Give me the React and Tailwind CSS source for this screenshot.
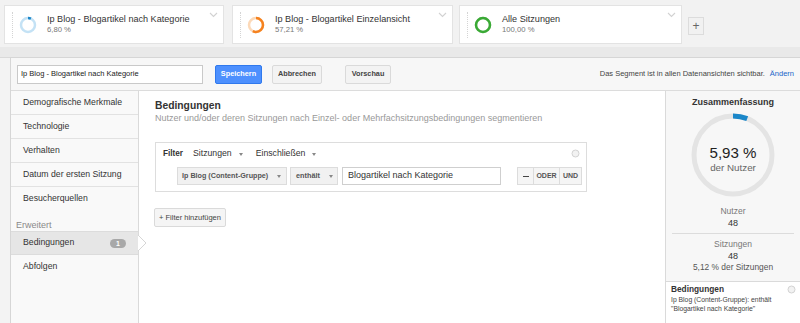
import React from 'react';

function Ring({ pct, color, track, size = 18, r = 7, stroke = 2.5 }) {
  const c = 2 * Math.PI * r;
  const len = (pct / 100) * c;
  return (
    <svg width={size} height={size} viewBox={`0 0 ${size} ${size}`}>
      <circle cx={size / 2} cy={size / 2} r={r} fill="none" stroke={track} strokeWidth={stroke} />
      <circle cx={size / 2} cy={size / 2} r={r} fill="none" stroke={color} strokeWidth={stroke}
        strokeDasharray={`${len} ${c}`} transform={`rotate(-90 ${size / 2} ${size / 2})`} />
    </svg>
  );
}

function Caret({ ml = 'ml-[7px]' }) {
  return (
    <svg className={`${ml} shrink-0`} width="4" height="3" viewBox="0 0 4 3">
      <path d="M0 0 L4 0 L2 3 Z" fill="#888" />
    </svg>
  );
}

function SegmentCard({ title, pct, value, color, track, width, ml }) {
  return (
    <div className={`${width} ${ml} h-[39px] bg-white border border-[#e3e3e3] flex items-center relative`}>
      <div className="ml-[7px] h-[26px] border-l border-dotted border-[#d4d4d4]" />
      <div className="ml-[6px]">
        <Ring pct={value} color={color} track={track} />
      </div>
      <div className="ml-[10px] -mt-[2px] whitespace-nowrap">
        <div className="text-[9.1px] leading-[12px] text-[#333]">{title}</div>
        <div className="text-[7.7px] leading-[10px] text-[#777]">{pct}</div>
      </div>
      <svg className="absolute right-[5px] top-[6px]" width="9" height="6" viewBox="0 0 9 6">
        <path d="M1 1 L4.5 4.5 L8 1" fill="none" stroke="#d2d2d2" strokeWidth="1.1" />
      </svg>
    </div>
  );
}

const NAV = ['Demografische Merkmale', 'Technologie', 'Verhalten', 'Datum der ersten Sitzung'];

export default function App() {
  const R = 39;
  const C = 2 * Math.PI * R;
  return (
    <div className="w-[800px] h-[323px] overflow-hidden bg-[#f2f2f2] font-['Liberation_Sans',Arial,sans-serif] flex flex-col">
      <div className="h-[47px] flex items-start pt-[5px] shrink-0">
        <SegmentCard title="Ip Blog - Blogartikel nach Kategorie" pct="6,80 %" value={6.8}
          color="#1b87c9" track="#c4e2f5" width="w-[220px]" ml="ml-[4px]" />
        <SegmentCard title="Ip Blog - Blogartikel Einzelansicht" pct="57,21 %" value={57.21}
          color="#f5821f" track="#fcd9b8" width="w-[221px]" ml="ml-[8px]" />
        <SegmentCard title="Alle Sitzungen" pct="100,00 %" value={100}
          color="#3aa935" track="#c9e8c5" width="w-[223px]" ml="ml-[6px]" />
        <div className="ml-[6px] mt-[12px] w-[16px] h-[18px] bg-[#f1f1f1] border border-[#dcdcdc] flex items-center justify-center text-[12px] leading-none text-[#666]">+</div>
      </div>
      <div className="h-[10px] bg-[#e9e9e9] shrink-0" />

      <div className="flex-1 flex min-h-0">
        <div className="w-[10px] bg-[#f3f3f3] border-t border-[#d9d9d9]" />
        <div className="flex-1 flex flex-col border-l border-t border-[#d6d6d6] bg-white min-w-0">
          <div className="h-[33px] shrink-0 bg-[#f7f7f7] border-b border-[#dcdcdc] flex items-center pl-[6px] pr-[6px] whitespace-nowrap">
            <div className="w-[186px] h-[19px] bg-white border border-[#c9c9c9] flex items-center pl-[3px] text-[7.5px] text-[#222]">
              Ip Blog - Blogartikel nach Kategorie
            </div>
            <div className="ml-[12px] w-[47px] h-[19px] bg-[#4d90fe] border border-[#3079ed] rounded-[2px] flex items-center justify-center text-[7.3px] font-bold text-white">Speichern</div>
            <div className="ml-[10px] w-[50px] h-[19px] bg-[#f3f3f3] border border-[#dadada] rounded-[2px] flex items-center justify-center text-[7.3px] font-bold text-[#444]">Abbrechen</div>
            <div className="ml-[23px] w-[46px] h-[19px] bg-[#f3f3f3] border border-[#dadada] rounded-[2px] flex items-center justify-center text-[7.3px] font-bold text-[#444]">Vorschau</div>
            <div className="ml-auto text-[7.5px] text-[#444]">
              Das Segment ist in allen Datenansichten sichtbar.<span className="ml-[5px] text-[#1a66c9]">Ändern</span>
            </div>
          </div>

          <div className="flex-1 flex min-h-0">
            <div className="w-[128px] shrink-0 bg-[#f9f9f9] border-r border-[#dadada] flex flex-col whitespace-nowrap">
              {NAV.map(n => (
                <div key={n} className="h-[24px] border-b border-[#e2e2e2] flex items-center pl-[12px] text-[8.7px] text-[#333]">{n}</div>
              ))}
              <div className="h-[24px] flex items-center pl-[12px] text-[8.7px] text-[#333]">Besucherquellen</div>
              <div className="h-[20px] flex items-end pl-[5px] text-[9px] leading-[11px] text-[#8a8a8a]">Erweitert</div>
              <div className="h-[24px] bg-[#e6e6e6] border-y border-[#dcdcdc] flex items-center pl-[12px] pr-[12px] text-[8.7px] text-[#333]">
                Bedingungen
                <span className="ml-auto w-[16px] h-[9px] rounded-full bg-[#a8a8a8] text-white text-[7px] font-bold leading-[9px] text-center">1</span>
              </div>
              <div className="h-[24px] flex items-center pl-[12px] text-[8.7px] text-[#333]">Abfolgen</div>
            </div>

            <div className="flex-1 relative pl-[16px] pt-[8px] min-w-0 whitespace-nowrap">
              <svg className="absolute -left-[1px] top-[144px]" width="9" height="16" viewBox="0 0 9 16">
                <path d="M0 0 L8 8 L0 16" fill="#ffffff" stroke="#d6d6d6" strokeWidth="1" />
              </svg>
              <div className="text-[10.3px] font-bold text-[#333] leading-[13px]">Bedingungen</div>
              <div className="text-[9px] text-[#999] leading-[12px]">Nutzer und/oder deren Sitzungen nach Einzel- oder Mehrfachsitzungsbedingungen segmentieren</div>

              <div className="mt-[18px] w-[432px] h-[50px] border border-[#dddddd] relative">
                <div className="flex items-center h-[22px] pl-[7px] text-[8.7px] text-[#333]">
                  <span className="font-bold text-[8.2px]">Filter</span>
                  <span className="ml-[10px]">Sitzungen</span><Caret />
                  <span className="ml-[13px]">Einschließen</span><Caret />
                </div>
                <svg className="absolute right-[6px] top-[6px]" width="9" height="9" viewBox="0 0 9 9">
                  <circle cx="4.5" cy="4.5" r="3.5" fill="#f2f2f2" stroke="#d3d3d3" />
                </svg>
                <div className="flex items-center pl-[21px] mt-[2px] h-[18px]">
                  <div className="w-[110px] h-[18px] bg-[#f1f1f1] border border-[#dcdcdc] flex items-center pl-[4px] text-[7.2px] font-bold text-[#555]">
                    Ip Blog (Content-Gruppe)<Caret ml="ml-[9px]" />
                  </div>
                  <div className="ml-[3px] w-[48px] h-[18px] bg-[#f1f1f1] border border-[#dcdcdc] flex items-center pl-[5px] text-[7.3px] font-bold text-[#555]">
                    enthält<Caret ml="ml-[9px]" />
                  </div>
                  <div className="ml-[4px] w-[159px] h-[18px] bg-white border border-[#cfcfcf] flex items-center pl-[5px] text-[9px] text-[#333]">
                    Blogartikel nach Kategorie
                  </div>
                  <div className="ml-[16px] flex h-[18px] border border-[#dcdcdc] bg-[#f5f5f5] text-[7px] font-bold text-[#555]">
                    <div className="w-[16px] flex items-center justify-center border-r border-[#dcdcdc]">
                      <div className="w-[6px] border-t-[1.5px] border-[#444]" />
                    </div>
                    <div className="w-[26px] flex items-center justify-center border-r border-[#dcdcdc]">ODER</div>
                    <div className="w-[21px] flex items-center justify-center">UND</div>
                  </div>
                </div>
              </div>

              <div className="mt-[16px] -ml-[1px] w-[72px] h-[19px] bg-[#f5f5f5] border border-[#dadada] rounded-[2px] flex items-center justify-center text-[7.5px] text-[#444]">
                + Filter hinzufügen
              </div>
            </div>

            <div className="w-[135px] shrink-0 bg-[#f7f7f7] border-l border-[#dadada] flex flex-col items-center whitespace-nowrap">
              <div className="mt-[5px] text-[9px] font-bold text-[#333] leading-[12px]">Zusammenfassung</div>
              <div className="mt-[4px] w-[86px] h-[86px] relative flex flex-col items-center justify-center">
                <svg className="absolute inset-0" width="86" height="86" viewBox="0 0 86 86">
                  <circle cx="43" cy="43" r={R} fill="none" stroke="#e4e4e4" strokeWidth="5" />
                  <circle cx="43" cy="43" r={R} fill="none" stroke="#1b87c9" strokeWidth="5"
                    strokeDasharray={`${0.0593 * C} ${C}`} transform="rotate(-90 43 43)" />
                </svg>
                <div className="mt-[8px] text-[15.1px] leading-[18px] text-[#222]">5,93 %</div>
                <div className="text-[9.8px] leading-[12px] text-[#666]">der Nutzer</div>
              </div>
              <div className="mt-[8px] text-[8.5px] leading-[11px] text-[#777]">Nutzer</div>
              <div className="text-[9px] leading-[12px] text-[#333]">48</div>
              <div className="mt-[4px] w-[122px] border-t border-[#dcdcdc]" />
              <div className="mt-[5px] text-[8.5px] leading-[11px] text-[#777]">Sitzungen</div>
              <div className="text-[9px] leading-[12px] text-[#333]">48</div>
              <div className="text-[8.4px] leading-[11px] text-[#555]">5,12 % der Sitzungen</div>
              <div className="mt-[8px] self-stretch flex-1 bg-white border-t border-[#dadada] relative pl-[5px] pt-[2px]">
                <div className="text-[8.3px] font-bold text-[#333] leading-[11px]">Bedingungen</div>
                <div className="text-[6.8px] leading-[9px] text-[#444]">Ip Blog (Content-Gruppe): enthält<br />"Blogartikel nach Kategorie"</div>
                <svg className="absolute right-[4px] top-[3px]" width="9" height="9" viewBox="0 0 9 9">
                  <circle cx="4.5" cy="4.5" r="3.5" fill="#f2f2f2" stroke="#d3d3d3" />
                </svg>
              </div>
            </div>
          </div>
        </div>
      </div>
    </div>
  );
}
